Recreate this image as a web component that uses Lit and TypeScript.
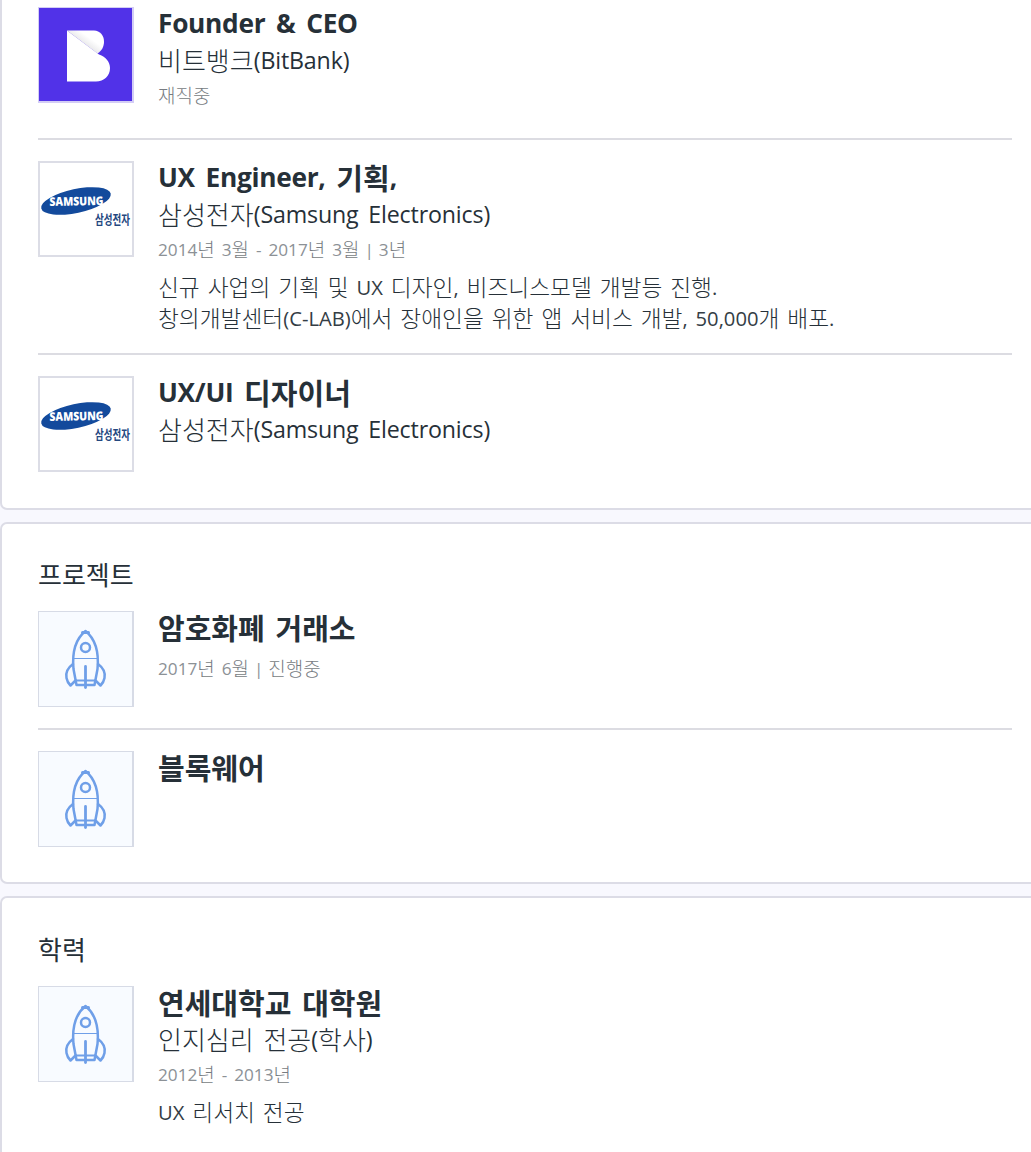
import { LitElement, html, css, svg, nothing } from "lit";
import { customElement, property } from "lit/decorators.js";

type Logo = "bitbank" | "samsung" | "rocket";

interface Entry {
  logo: Logo;
  title: string;
  org?: string;
  period?: string;
  lines?: string[];
}

interface Section {
  heading?: string;
  kind: string;
  entries: Entry[];
}

const SECTIONS: Section[] = [
  {
    kind: "career",
    entries: [
      { logo: "bitbank", title: "Founder & CEO", org: "비트뱅크(BitBank)", period: "재직중" },
      {
        logo: "samsung",
        title: "UX Engineer, 기획,",
        org: "삼성전자(Samsung Electronics)",
        period: "2014년 3월 - 2017년 3월 | 3년",
        lines: [
          "신규 사업의 기획 및 UX 디자인, 비즈니스모델 개발등 진행.",
          "창의개발센터(C-LAB)에서 장애인을 위한 앱 서비스 개발, 50,000개 배포.",
        ],
      },
      { logo: "samsung", title: "UX/UI 디자이너", org: "삼성전자(Samsung Electronics)" },
    ],
  },
  {
    heading: "프로젝트",
    kind: "project",
    entries: [
      { logo: "rocket", title: "암호화폐 거래소", period: "2017년 6월 | 진행중" },
      { logo: "rocket", title: "블록웨어" },
    ],
  },
  {
    heading: "학력",
    kind: "education",
    entries: [
      {
        logo: "rocket",
        title: "연세대학교 대학원",
        org: "인지심리 전공(학사)",
        period: "2012년 - 2013년",
        lines: ["UX 리서치 전공"],
      },
    ],
  },
];

/** Wraps Latin runs so that they can be tracked apart from Hangul. */
const mixed = (text: string) =>
  text
    .split(/([\x21-\x7e]+)/)
    .map((part) =>
      /^[\x21-\x7e]/.test(part)
        ? html`<span class="latin ${part === "|" ? "bar" : ""}">${part}</span>`
        : part
    );

const LOGOS = {
  bitbank: svg`
    <defs>
      <linearGradient id="fold" x1="40" y1="43" x2="50" y2="29" gradientUnits="userSpaceOnUse">
        <stop offset="0" stop-color="#d2d2d6" />
        <stop offset="1" stop-color="#ffffff" />
      </linearGradient>
    </defs>
    <rect width="92" height="92" fill="#5132e8" />
    <path d="M27 21.500H54C60 21.500 64 26.500 64 32.500C64 38 61.500 42 57.500 44.500L27 21.500Z" fill="url(#fold)" />
    <path d="M27 21.500L59 45.500C66 48 70 53 70 59C70 67 64 72.500 56 72.500H27Z" fill="#fff" />`,
  samsung: svg`
    <ellipse cx="36" cy="38" rx="35.500" ry="12" transform="rotate(-12 36 38)" fill="#134a9c" />
    <text class="wordmark" x="9.500" y="42.500" textLength="54" lengthAdjust="spacingAndGlyphs" transform="rotate(-1 36 38)">SAMSUNG</text>
    <text class="wordmark-ko" x="55" y="60.500" textLength="35" lengthAdjust="spacingAndGlyphs">삼성전자</text>`,
  rocket: svg`
    <g fill="none" stroke="#6f9fe8" stroke-width="2.500" stroke-linejoin="round" stroke-linecap="round" transform="translate(1 0)">
      <path d="M36.500 73L33.500 57C32 41 35.500 27 45.500 19C55.500 27 59 41 57.500 57L54.500 73Z" />
      <path d="M42.500 20.500H48.500" stroke-width="3" />
      <circle cx="45.500" cy="35.500" r="4.500" />
      <path d="M33.500 46.500H57.500" stroke-width="1.100" />
      <path d="M33 52C27.500 56 25.500 61 26.500 66C27 69 28.500 71.500 30.500 73.500L35.500 68.500" />
      <path d="M58 52C63.500 56 65.500 61 64.500 66C64 69 62.500 71.500 60.500 73.500L55.500 68.500" />
      <path d="M36 68.500H55" stroke-width="1.800" />
      <path d="M45.500 54.500V75.500" stroke-width="2.800" />
    </g>`,
};

@customElement("company-logo")
class CompanyLogo extends LitElement {
  @property({ reflect: true }) logo: Logo = "rocket";

  static styles = css`
    :host {
      display: block;
      flex: none;
      box-sizing: border-box;
      width: 96px;
      height: 96px;
      border: 2px solid #dcdde6;
      background: #fff;
    }
    :host([logo="bitbank"]) {
      border-color: #d3cdf5;
      border-width: 1px 2px 2px 1px;
      padding: 1px 0 0 1px;
      background: #5132e8;
    }
    :host([logo="rocket"]) {
      border-color: #d7dbe6;
      border-width: 1px 2px 1px 1px;
      background: #f8fbff;
    }
    svg {
      display: block;
      overflow: visible;
    }
    .wordmark {
      font: 800 12px "Open Sans", sans-serif;
      fill: #fff;
    }
    .wordmark-ko {
      font: 700 13px "Noto Sans CJK KR", sans-serif;
      fill: #24477f;
    }
  `;

  render() {
    return html`<svg width="92" height="92" viewBox="0 0 92 92">${LOGOS[this.logo]}</svg>`;
  }
}

@customElement("app-root")
class AppRoot extends LitElement {
  static styles = css`
    :host {
      display: flex;
      flex-direction: column;
      gap: 12px;
      box-sizing: border-box;
      height: 1152px;
      overflow: hidden;
      background: #f8f8fe;
      font-family: "Open Sans", "Noto Sans CJK KR", sans-serif;
      color: #263038;
    }
    .card {
      flex: none;
      box-sizing: border-box;
      margin-right: -20px;
      padding: 0 37px 36px 36px;
      border: 2px solid #dcdce6;
      border-radius: 7px;
      background: #fff;
    }
    .career {
      height: 510px;
      padding-top: 7px;
      border-top: 0;
      border-top-left-radius: 0;
    }
    .project {
      height: 362px;
    }
    .education {
      height: 300px;
    }
    .heading {
      margin: 0;
      padding: 33px 0 18px;
      font-size: 26px;
      font-weight: 400;
      line-height: 36px;
    }
    .education .heading {
      padding: 34px 0 18px;
    }
    .entry {
      display: flex;
      gap: 24px;
      padding-bottom: 21px;
    }
    .entry + .entry {
      padding-top: 21px;
      border-top: 2px solid #dcdce2;
    }
    .entry:last-child {
      padding-bottom: 0;
    }
    .career .text {
      min-height: 110px;
    }
    .career .entry:nth-child(2) {
      padding-bottom: 20px;
    }
    .text {
      white-space: nowrap;
    }
    .latin {
      line-height: 1;
    }
    .title {
      margin: 0;
      height: 35px;
      font-size: 29px;
      font-weight: 700;
      line-height: 36px;
      word-spacing: 3.200px;
    }
    .title .latin {
      font-size: 26.300px;
      font-weight: 700;
      letter-spacing: -0.300px;
      vertical-align: 3px;
    }
    .org {
      height: 37px;
      font-size: 26px;
      font-weight: 300;
      line-height: 38px;
      word-spacing: 3px;
    }
    .org .latin {
      font-size: 23.200px;
      font-weight: 400;
      letter-spacing: -0.150px;
      vertical-align: 2px;
    }
    .period {
      height: 34px;
      font-size: 19px;
      font-weight: 300;
      line-height: 35px;
      color: #777c82;
      word-spacing: 2px;
    }
    .period .latin {
      font-size: 17.200px;
      font-weight: 400;
      color: #8c9196;
      vertical-align: 1px;
    }
    .period .bar {
      margin: 0 -2px;
    }
    .project .period {
      padding-top: 6px;
    }
    .line {
      font-size: 22.700px;
      font-weight: 300;
      line-height: 31px;
      height: 30.500px;
      word-spacing: 2px;
    }
    .line .latin {
      font-size: 20.200px;
      font-weight: 400;
      color: #343d45;
      vertical-align: 1px;
    }
    .lines {
      padding-top: 5px;
    }
  `;

  private renderEntry(entry: Entry) {
    return html`<article class="entry">
      <company-logo .logo=${entry.logo}></company-logo>
      <div class="text">
        <h3 class="title">${mixed(entry.title)}</h3>
        ${entry.org ? html`<div class="org">${mixed(entry.org)}</div>` : nothing}
        ${entry.period ? html`<div class="period">${mixed(entry.period)}</div>` : nothing}
        ${entry.lines
          ? html`<div class="lines">${entry.lines.map((l) => html`<div class="line">${mixed(l)}</div>`)}</div>`
          : nothing}
      </div>
    </article>`;
  }

  render() {
    return SECTIONS.map(
      (s) => html`<section class="card ${s.kind}">
        ${s.heading ? html`<h2 class="heading">${s.heading}</h2>` : nothing}
        <div class="entries">${s.entries.map((e) => this.renderEntry(e))}</div>
      </section>`
    );
  }
}
